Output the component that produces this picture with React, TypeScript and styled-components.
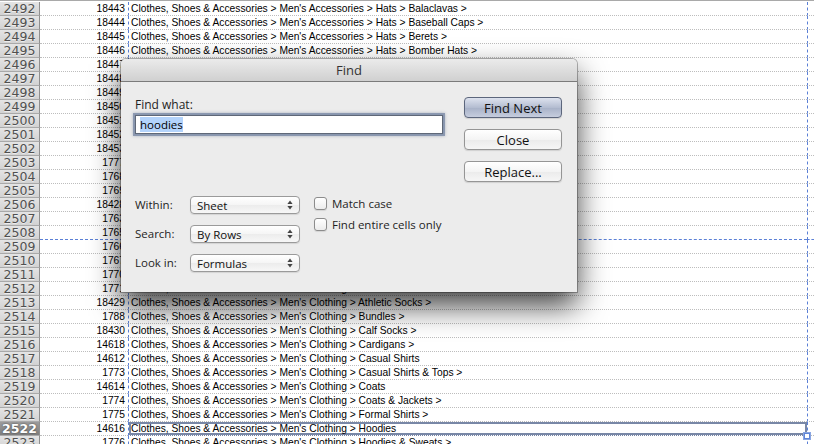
import { styled, createGlobalStyle } from 'styled-components'

const GlobalStyle = createGlobalStyle`
  body {
    margin: 0;
    background: #fff;
    overflow: hidden;
  }
`

const base = 'Clothes, Shoes & Accessories > '

const rows: [number, number, string][] = [
  [2492, 18443, "Men's Accessories > Hats > Balaclavas >"],
  [2493, 18444, "Men's Accessories > Hats > Baseball Caps >"],
  [2494, 18445, "Men's Accessories > Hats > Berets >"],
  [2495, 18446, "Men's Accessories > Hats > Bomber Hats >"],
  [2496, 18447, "Men's Accessories > Hats > Bowler Hats >"],
  [2497, 18448, "Men's Accessories > Hats > Cowboy Hats >"],
  [2498, 18449, "Men's Accessories > Hats > Fedoras >"],
  [2499, 18450, "Men's Accessories > Hats > Flat Caps >"],
  [2500, 18451, "Men's Accessories > Hats > Panama Hats >"],
  [2501, 18452, "Men's Accessories > Hats > Sun Hats >"],
  [2502, 18453, "Men's Accessories > Hats > Trilbies >"],
  [2503, 1777, "Men's Accessories > Hats >"],
  [2504, 1768, "Men's Accessories > Money Clips"],
  [2505, 1769, "Men's Accessories > Scarves & Shawls"],
  [2506, 18428, "Men's Accessories > Sunglasses >"],
  [2507, 1763, "Men's Accessories > Ties"],
  [2508, 1765, "Men's Accessories > Wallets"],
  [2509, 1766, "Men's Accessories > Other"],
  [2510, 1767, "Men's Accessories > Cufflinks"],
  [2511, 1770, "Men's Clothing >"],
  [2512, 1771, "Men's Clothing > Activewear >"],
  [2513, 18429, "Men's Clothing > Athletic Socks >"],
  [2514, 1788, "Men's Clothing > Bundles >"],
  [2515, 18430, "Men's Clothing > Calf Socks >"],
  [2516, 14618, "Men's Clothing > Cardigans >"],
  [2517, 14612, "Men's Clothing > Casual Shirts"],
  [2518, 1773, "Men's Clothing > Casual Shirts & Tops >"],
  [2519, 14614, "Men's Clothing > Coats"],
  [2520, 1774, "Men's Clothing > Coats & Jackets >"],
  [2521, 1775, "Men's Clothing > Formal Shirts >"],
  [2522, 14616, "Men's Clothing > Hoodies"],
  [2523, 1776, "Men's Clothing > Hoodies & Sweats >"],
]

const SELECTED = 2522
const PAGE_BREAK = 2508

const Arrows = () => (
  <svg width="6" height="10" viewBox="0 0 6 10">
    <path d="M3 0.5 L5.6 4 L0.4 4 Z" fill="#444" />
    <path d="M3 9.5 L5.6 6 L0.4 6 Z" fill="#444" />
  </svg>
)

const App = () => {
  return (
    <>
      <GlobalStyle />
      <Sheet>
        {rows.map(([n, id, text]) => (
          <Row key={n}>
            <HeaderCell $selected={n === SELECTED}>{n}</HeaderCell>
            <NumCell $break={n === PAGE_BREAK}>{id}</NumCell>
            <TextCell $break={n === PAGE_BREAK} $selected={n === SELECTED}>
              {base + text}
              {n === SELECTED && <Handle />}
            </TextCell>
            <EdgeCell $break={n === PAGE_BREAK} />
          </Row>
        ))}

        <Dialog>
          <TitleBar>{'Find'}</TitleBar>
          <Body>
            <Top>
              <FindColumn>
                <FieldLabel>{'Find what:'}</FieldLabel>
                <TextField>
                  <Highlight>{'hoodies'}</Highlight>
                </TextField>
              </FindColumn>
              <Buttons>
                <Button $default>{'Find Next'}</Button>
                <Button>{'Close'}</Button>
                <Button>{'Replace...'}</Button>
              </Buttons>
            </Top>
            <Options>
              <OptGrid>
                <OptLabel>{'Within:'}</OptLabel>
                <Select>
                  <span>{'Sheet'}</span>
                  <Arrows />
                </Select>
                <OptLabel>{'Search:'}</OptLabel>
                <Select>
                  <span>{'By Rows'}</span>
                  <Arrows />
                </Select>
                <OptLabel>{'Look in:'}</OptLabel>
                <Select>
                  <span>{'Formulas'}</span>
                  <Arrows />
                </Select>
              </OptGrid>
              <Checks>
                <CheckItem>
                  <CheckBox />
                  <span>{'Match case'}</span>
                </CheckItem>
                <CheckItem>
                  <CheckBox />
                  <span>{'Find entire cells only'}</span>
                </CheckItem>
              </Checks>
            </Options>
          </Body>
        </Dialog>
      </Sheet>
    </>
  )
}

export default App

const blue = '#5b80d6'

const Sheet = styled.div`
  position: relative;
  width: 814px;
  height: 444px;
  overflow: hidden;
  padding-top: 1px;
  box-sizing: border-box;
  background: #fff;
  border-top: 1px solid #a9a9a9;
`

const Row = styled.div`
  display: grid;
  grid-template-columns: 40px 88px 679px 1fr;
  height: 14px;
`

const HeaderCell = styled.div<{ $selected?: boolean }>`
  box-sizing: border-box;
  border-right: 1px solid #8f8f8f;
  border-bottom: 1px solid #a9a9a9;
  background: ${({ $selected }) =>
    $selected ? 'linear-gradient(#9c9c9c, #7f7f7f)' : 'linear-gradient(#e4e4e4, #d2d2d2)'};
  color: ${({ $selected }) => ($selected ? '#fff' : '#505050')};
  font: ${({ $selected }) => ($selected ? 'bold' : 'normal')} 12.5px 'DejaVu Sans', sans-serif;
  line-height: 13px;
  text-align: center;
  text-shadow: ${({ $selected }) =>
    $selected ? '0 0 2px rgba(0, 0, 0, 0.6)' : '0 1px 0 rgba(255, 255, 255, 0.6)'};
`

const NumCell = styled.div<{ $break?: boolean }>`
  box-sizing: border-box;
  padding-right: 3px;
  text-align: right;
  font: 10.25px 'Liberation Sans', Arial, sans-serif;
  line-height: 13px;
  color: #000;
  border-bottom: 1px ${({ $break }) => ($break ? `dashed ${blue}` : 'dotted #bdbdbd')};
`

const TextCell = styled.div<{ $break?: boolean; $selected?: boolean }>`
  position: relative;
  box-sizing: border-box;
  padding-left: 2px;
  white-space: nowrap;
  font: 10.25px 'Liberation Sans', Arial, sans-serif;
  line-height: 13px;
  color: #000;
  border-left: 1px dashed ${blue};
  border-bottom: 1px ${({ $break }) => ($break ? `dashed ${blue}` : 'dotted #bdbdbd')};
  box-shadow: ${({ $selected }) => ($selected ? 'inset 0 0 0 2px #7887a6' : 'none')};
  ${({ $selected }) => ($selected ? 'border-bottom-color: #7887a6;' : '')}
`

const Handle = styled.span`
  position: absolute;
  right: -3px;
  bottom: -4px;
  width: 4px;
  height: 4px;
  background: #fff;
  border: 1px solid #5f86d8;
  box-shadow: 0 0 0 1px #8aa6e2;
`

const EdgeCell = styled.div<{ $break?: boolean }>`
  box-sizing: border-box;
  border-left: 1px dashed ${blue};
  border-bottom: 1px ${({ $break }) => ($break ? `dashed ${blue}` : 'dotted #bdbdbd')};
`

const Dialog = styled.div`
  position: absolute;
  left: 121px;
  top: 58px;
  width: 456px;
  height: 233px;
  display: flex;
  flex-direction: column;
  background: #ececec;
  border-radius: 5px 5px 0 0;
  box-shadow: 0 14px 30px rgba(0, 0, 0, 0.75), 0 0 0 1px rgba(0, 0, 0, 0.28);
  font-family: 'Open Sans', sans-serif;
  color: #1e1e1e;
`

const TitleBar = styled.div`
  height: 22px;
  line-height: 22px;
  border-bottom: 1px solid #7b7b7b;
  border-radius: 5px 5px 0 0;
  background: linear-gradient(#ebebeb, #d0d0d0);
  text-align: center;
  font-size: 13px;
  color: #333;
`

const Body = styled.div`
  display: flex;
  flex-direction: column;
  padding: 15px 15px 0 14px;
`

const Top = styled.div`
  display: grid;
  grid-template-columns: 1fr 98px;
  column-gap: 19px;
`

const FindColumn = styled.div`
  display: flex;
  flex-direction: column;
`

const FieldLabel = styled.div`
  font-size: 12px;
  line-height: 16px;
`

const TextField = styled.div`
  margin-top: 2px;
  width: 308px;
  height: 19px;
  box-sizing: border-box;
  padding-left: 4px;
  background: #fff;
  border: 1px solid #5f6878;
  box-shadow: 0 0 0 2px rgba(125, 140, 168, 0.8), 0 0 3px 2px rgba(95, 110, 140, 0.45);
  font-size: 11.5px;
  line-height: 17px;
  color: #000;
`

const Highlight = styled.span`
  background: #b3d3fb;
`

const Buttons = styled.div`
  display: flex;
  flex-direction: column;
  gap: 11px;
`

const Button = styled.button<{ $default?: boolean }>`
  height: 21px;
  width: 98px;
  padding: 0;
  border-radius: 4px;
  border: 1px solid ${({ $default }) => ($default ? '#5c667c' : '#959595')};
  background: ${({ $default }) =>
    $default
      ? 'linear-gradient(#dde2ee, #b4bdd1 50%, #a7b1c7 51%, #c6cdde)'
      : 'linear-gradient(#ffffff, #f4f4f4 50%, #ebebeb 51%, #f6f6f6)'};
  box-shadow: 0 1px 1px rgba(0, 0, 0, 0.12);
  font-family: 'Open Sans', sans-serif;
  font-size: 13px;
  line-height: 18px;
  color: #111;
`

const Options = styled.div`
  display: flex;
  margin-top: 14px;
`

const OptGrid = styled.div`
  display: grid;
  grid-template-columns: 55px 110px;
  row-gap: 11px;
  align-items: center;
`

const OptLabel = styled.div`
  font-size: 11.5px;
  line-height: 18px;
`

const Select = styled.div`
  height: 18px;
  box-sizing: border-box;
  display: flex;
  align-items: center;
  justify-content: space-between;
  padding: 0 6px 0 6px;
  border: 1px solid #9a9a9a;
  border-radius: 4px;
  background: linear-gradient(#ffffff, #f5f5f5 50%, #ececec 51%, #f7f7f7);
  box-shadow: 0 1px 1px rgba(0, 0, 0, 0.1);
  font-size: 11.5px;
  color: #111;
`

const Checks = styled.div`
  display: flex;
  flex-direction: column;
  gap: 8px;
  margin-left: 14px;
  padding-top: 1px;
`

const CheckItem = styled.div`
  display: flex;
  align-items: center;
  gap: 5px;
  height: 13px;
  font-size: 11.5px;
`

const CheckBox = styled.span`
  width: 13px;
  height: 13px;
  box-sizing: border-box;
  border: 1px solid #8c8c8c;
  border-radius: 3px;
  background: linear-gradient(#ffffff, #ececec);
  box-shadow: 0 1px 1px rgba(0, 0, 0, 0.1);
`
